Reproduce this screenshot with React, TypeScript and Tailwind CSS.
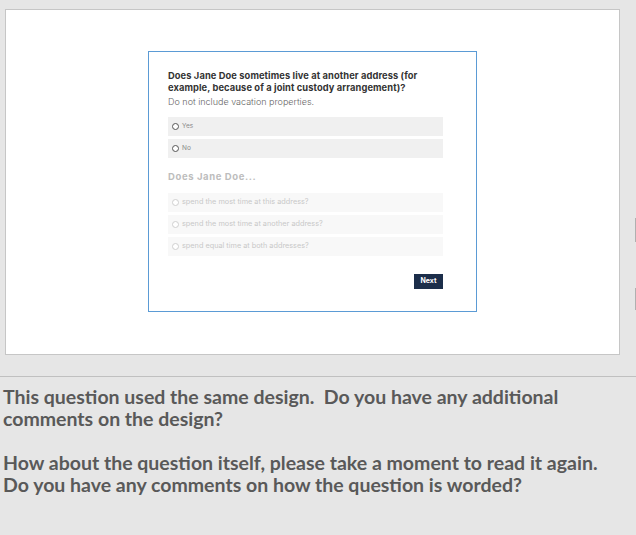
import React from 'react';

const mainOptions = ['Yes', 'No'];
const subOptions = [
  'spend the most time at this address?',
  'spend the most time at another address?',
  'spend equal time at both addresses?',
];

const Radio: React.FC<{ dim?: boolean }> = ({ dim }) => (
  <span
    className={`inline-block w-[7px] h-[7px] rounded-full border ${dim ? 'border-[#cfcfcf]' : 'border-[#555]'} bg-white shrink-0`}
  />
);

export default function App() {
  return (
    <div className="relative w-[636px] h-[535px] bg-[#e6e6e6] overflow-hidden">
      {/* slide preview */}
      <div className="pt-[9px] pl-[5px]">
        <div className="w-[615px] h-[346px] bg-white border border-[#c6c6c6] pt-[41px] pl-[142px]">
          <div
            className="w-[329px] h-[261px] border border-[#5b9bd5] px-[19px] pt-[18px] flex flex-col"
            style={{ fontFamily: 'Inter, "Noto Sans", sans-serif' }}
          >
            <p className="text-[9.3px] leading-[12px] font-bold text-[#333] tracking-[0.1px]">
              Does Jane Doe sometimes live at another address (for example, because of a joint custody arrangement)?
            </p>
            <p className="mt-[1px] text-[9px] leading-[13px] text-[#666] font-light">Do not include vacation properties.</p>

            <div className="mt-[9px] flex flex-col gap-[3px] w-[275px]">
              {mainOptions.map((o) => (
                <div key={o} className="h-[19px] bg-[#f0f0f0] flex items-center gap-[3px] pl-[4px]">
                  <Radio />
                  <span className="text-[6.5px] text-[#888]">{o}</span>
                </div>
              ))}
            </div>

            <p className="mt-[13px] text-[9.5px] leading-[12px] font-bold text-[#bdbdbd] tracking-[0.6px]">Does Jane Doe...</p>

            <div className="mt-[10px] flex flex-col gap-[3px] w-[275px]">
              {subOptions.map((o) => (
                <div key={o} className="h-[19px] bg-[#f8f8f8] flex items-center gap-[3px] pl-[4px]">
                  <Radio dim />
                  <span className="text-[7.3px] text-[#c8c8c8]">{o}</span>
                </div>
              ))}
            </div>

            <div className="mt-[18px] w-[275px] flex justify-end">
              <button className="w-[29px] h-[15px] bg-[#1c2e4a] text-white text-[7px] font-bold flex items-center justify-center">
                Next
              </button>
            </div>
          </div>
        </div>
      </div>

      {/* notes */}
      <div className="mt-[21px] border-t border-[#c0c0c0] pt-[9px] pl-[3px]">
        <div
          className="text-[19.5px] leading-[22px] font-bold text-[#595959]"
          style={{ fontFamily: 'Lato, "Liberation Sans", sans-serif' }}
        >
          <p>This question used the same design.&nbsp; Do you have any additional</p>
          <p>comments on the design?</p>
          <p className="mt-[22px]">How about the question itself, please take a moment to read it again.</p>
          <p>Do you have any comments on how the question is worded?</p>
        </div>
      </div>

      {/* scrollbar marks on the right edge */}
      <div className="absolute right-0 top-[218px] w-[1px] h-[24px] bg-[#b0b0b0]" />
      <div className="absolute right-0 top-[288px] w-[1px] h-[22px] bg-[#b0b0b0]" />
    </div>
  );
}
